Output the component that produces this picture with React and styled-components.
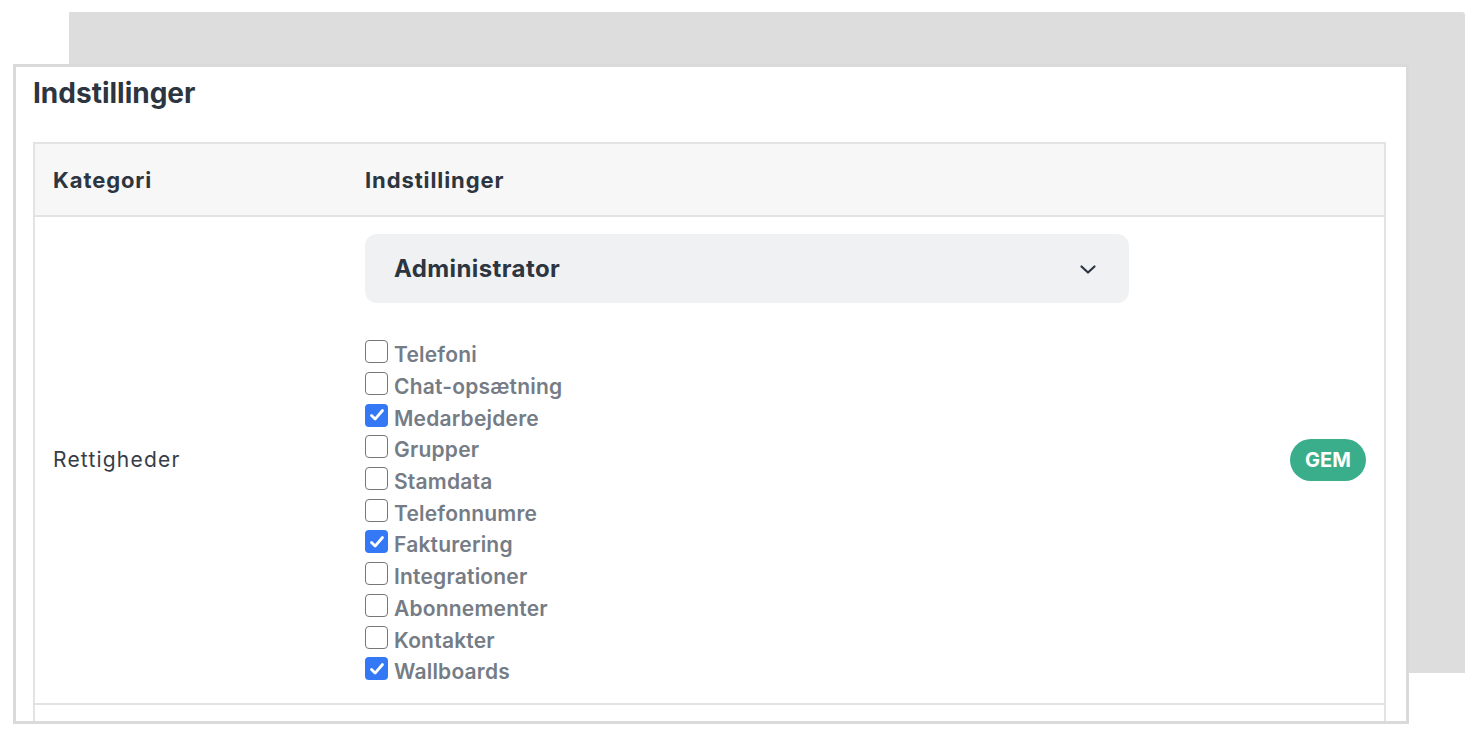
import React, { useState } from 'react';
import styled, { createGlobalStyle } from 'styled-components';

const Global = createGlobalStyle`
  html, body { margin: 0; padding: 0; background: #ffffff; }
  body { font-family: "Inter", "Noto Sans", sans-serif; }
`;

const Stage = styled.div`
  position: relative;
  width: 1476px;
  height: 736px;
  overflow: hidden;
`;

const Backdrop = styled.div`
  position: absolute;
  left: 69px;
  top: 12px;
  width: 1396px;
  height: 661px;
  background: #dddddd;
  border-top-right-radius: 3px;
`;

const Card = styled.section`
  position: relative;
  z-index: 1;
  box-sizing: border-box;
  margin: 64px 0 0 13px;
  width: 1396px;
  height: 660px;
  background: #ffffff;
  border: 3px solid #dadada;
  padding: 10px 20px 0 17px;
  overflow: hidden;
`;

const Title = styled.h1`
  margin: 0 0 33px;
  font-size: 28px;
  line-height: 32px;
  font-weight: 700;
  color: #2c3540;
`;

const Table = styled.div`
  border: 2px solid #e3e3e3;
  border-bottom: none;
`;

const Row = styled.div`
  display: grid;
  grid-template-columns: 312px 1fr auto;
  align-items: center;
  background: ${p => (p.$head ? '#f7f7f7' : '#ffffff')};
  border-bottom: 2px solid #e3e3e3;
  min-height: ${p => (p.$head ? '71px' : '40px')};
`;

const Cell = styled.div`
  padding: ${p => p.$pad || '0 18px'};
  font-size: ${p => (p.$head ? '22px' : '21px')};
  font-weight: ${p => (p.$head ? 700 : 400)};
  letter-spacing: ${p => (p.$head ? '0.9px' : '1.2px')};
  color: ${p => (p.$head ? '#2c3540' : '#363d46')};
`;

const Select = styled.div`
  box-sizing: border-box;
  width: 764px;
  height: 69px;
  background: #f0f1f3;
  border-radius: 12px;
  display: flex;
  align-items: center;
  justify-content: space-between;
  padding: 0 32px 0 29px;
  font-size: 24px;
  font-weight: 700;
  letter-spacing: 0.4px;
  color: #2c3540;
`;

const List = styled.div`
  margin-top: 36px;
  display: flex;
  flex-direction: column;
`;

const Option = styled.label`
  display: flex;
  align-items: center;
  gap: 6px;
  height: 31.7px;
  font-size: 21px;
  font-weight: 600;
  letter-spacing: 0.2px;
  color: #757c85;
  cursor: pointer;
`;

const Box = styled.span`
  box-sizing: border-box;
  flex: none;
  width: 23px;
  height: 23px;
  border-radius: 4px;
  margin-top: -6px;
  display: flex;
  align-items: center;
  justify-content: center;
  background: ${p => (p.$on ? '#3478f6' : '#ffffff')};
  border: ${p => (p.$on ? 'none' : '1.6px solid #777777')};
`;

const SaveButton = styled.button`
  width: 76px;
  height: 42px;
  border: none;
  border-radius: 21px;
  background: #3aae8a;
  color: #ffffff;
  font-family: inherit;
  font-size: 20px;
  font-weight: 700;
  cursor: pointer;
`;

const items = [
  ['Telefoni', false],
  ['Chat-opsætning', false],
  ['Medarbejdere', true],
  ['Grupper', false],
  ['Stamdata', false],
  ['Telefonnumre', false],
  ['Fakturering', true],
  ['Integrationer', false],
  ['Abonnementer', false],
  ['Kontakter', false],
  ['Wallboards', true],
];

function Check({ on }) {
  return (
    <Box $on={on}>
      {on && (
        <svg width="18" height="18" viewBox="0 0 18 18" fill="none">
          <path d="M3.5 9.5l3.6 3.6L14.5 4.5" stroke="#fff" strokeWidth="2.8" strokeLinecap="round" strokeLinejoin="round" />
        </svg>
      )}
    </Box>
  );
}

export default function App() {
  const [checked, setChecked] = useState(items.map(i => i[1]));
  const toggle = idx => setChecked(c => c.map((v, i) => (i === idx ? !v : v)));

  return (
    <Stage>
      <Global />
      <Backdrop />
      <Card>
        <Title>Indstillinger</Title>
        <Table>
          <Row $head>
            <Cell $head>Kategori</Cell>
            <Cell $head>Indstillinger</Cell>
            <Cell />
          </Row>
          <Row>
            <Cell>Rettigheder</Cell>
            <Cell $pad="17px 18px 15px">
              <Select>
                Administrator
                <svg width="18" height="12" viewBox="0 0 18 12" fill="none">
                  <path d="M2.5 3.5L9 9.5l6.5-6" stroke="#2c3540" strokeWidth="2.2" strokeLinecap="round" strokeLinejoin="round" />
                </svg>
              </Select>
              <List>
                {items.map(([name], i) => (
                  <Option key={name} onClick={() => toggle(i)}>
                    <Check on={checked[i]} />
                    {name}
                  </Option>
                ))}
              </List>
            </Cell>
            <Cell $pad="0 18px 0 0">
              <SaveButton>GEM</SaveButton>
            </Cell>
          </Row>
          <Row>
            <Cell />
            <Cell />
            <Cell />
          </Row>
        </Table>
      </Card>
    </Stage>
  );
}
